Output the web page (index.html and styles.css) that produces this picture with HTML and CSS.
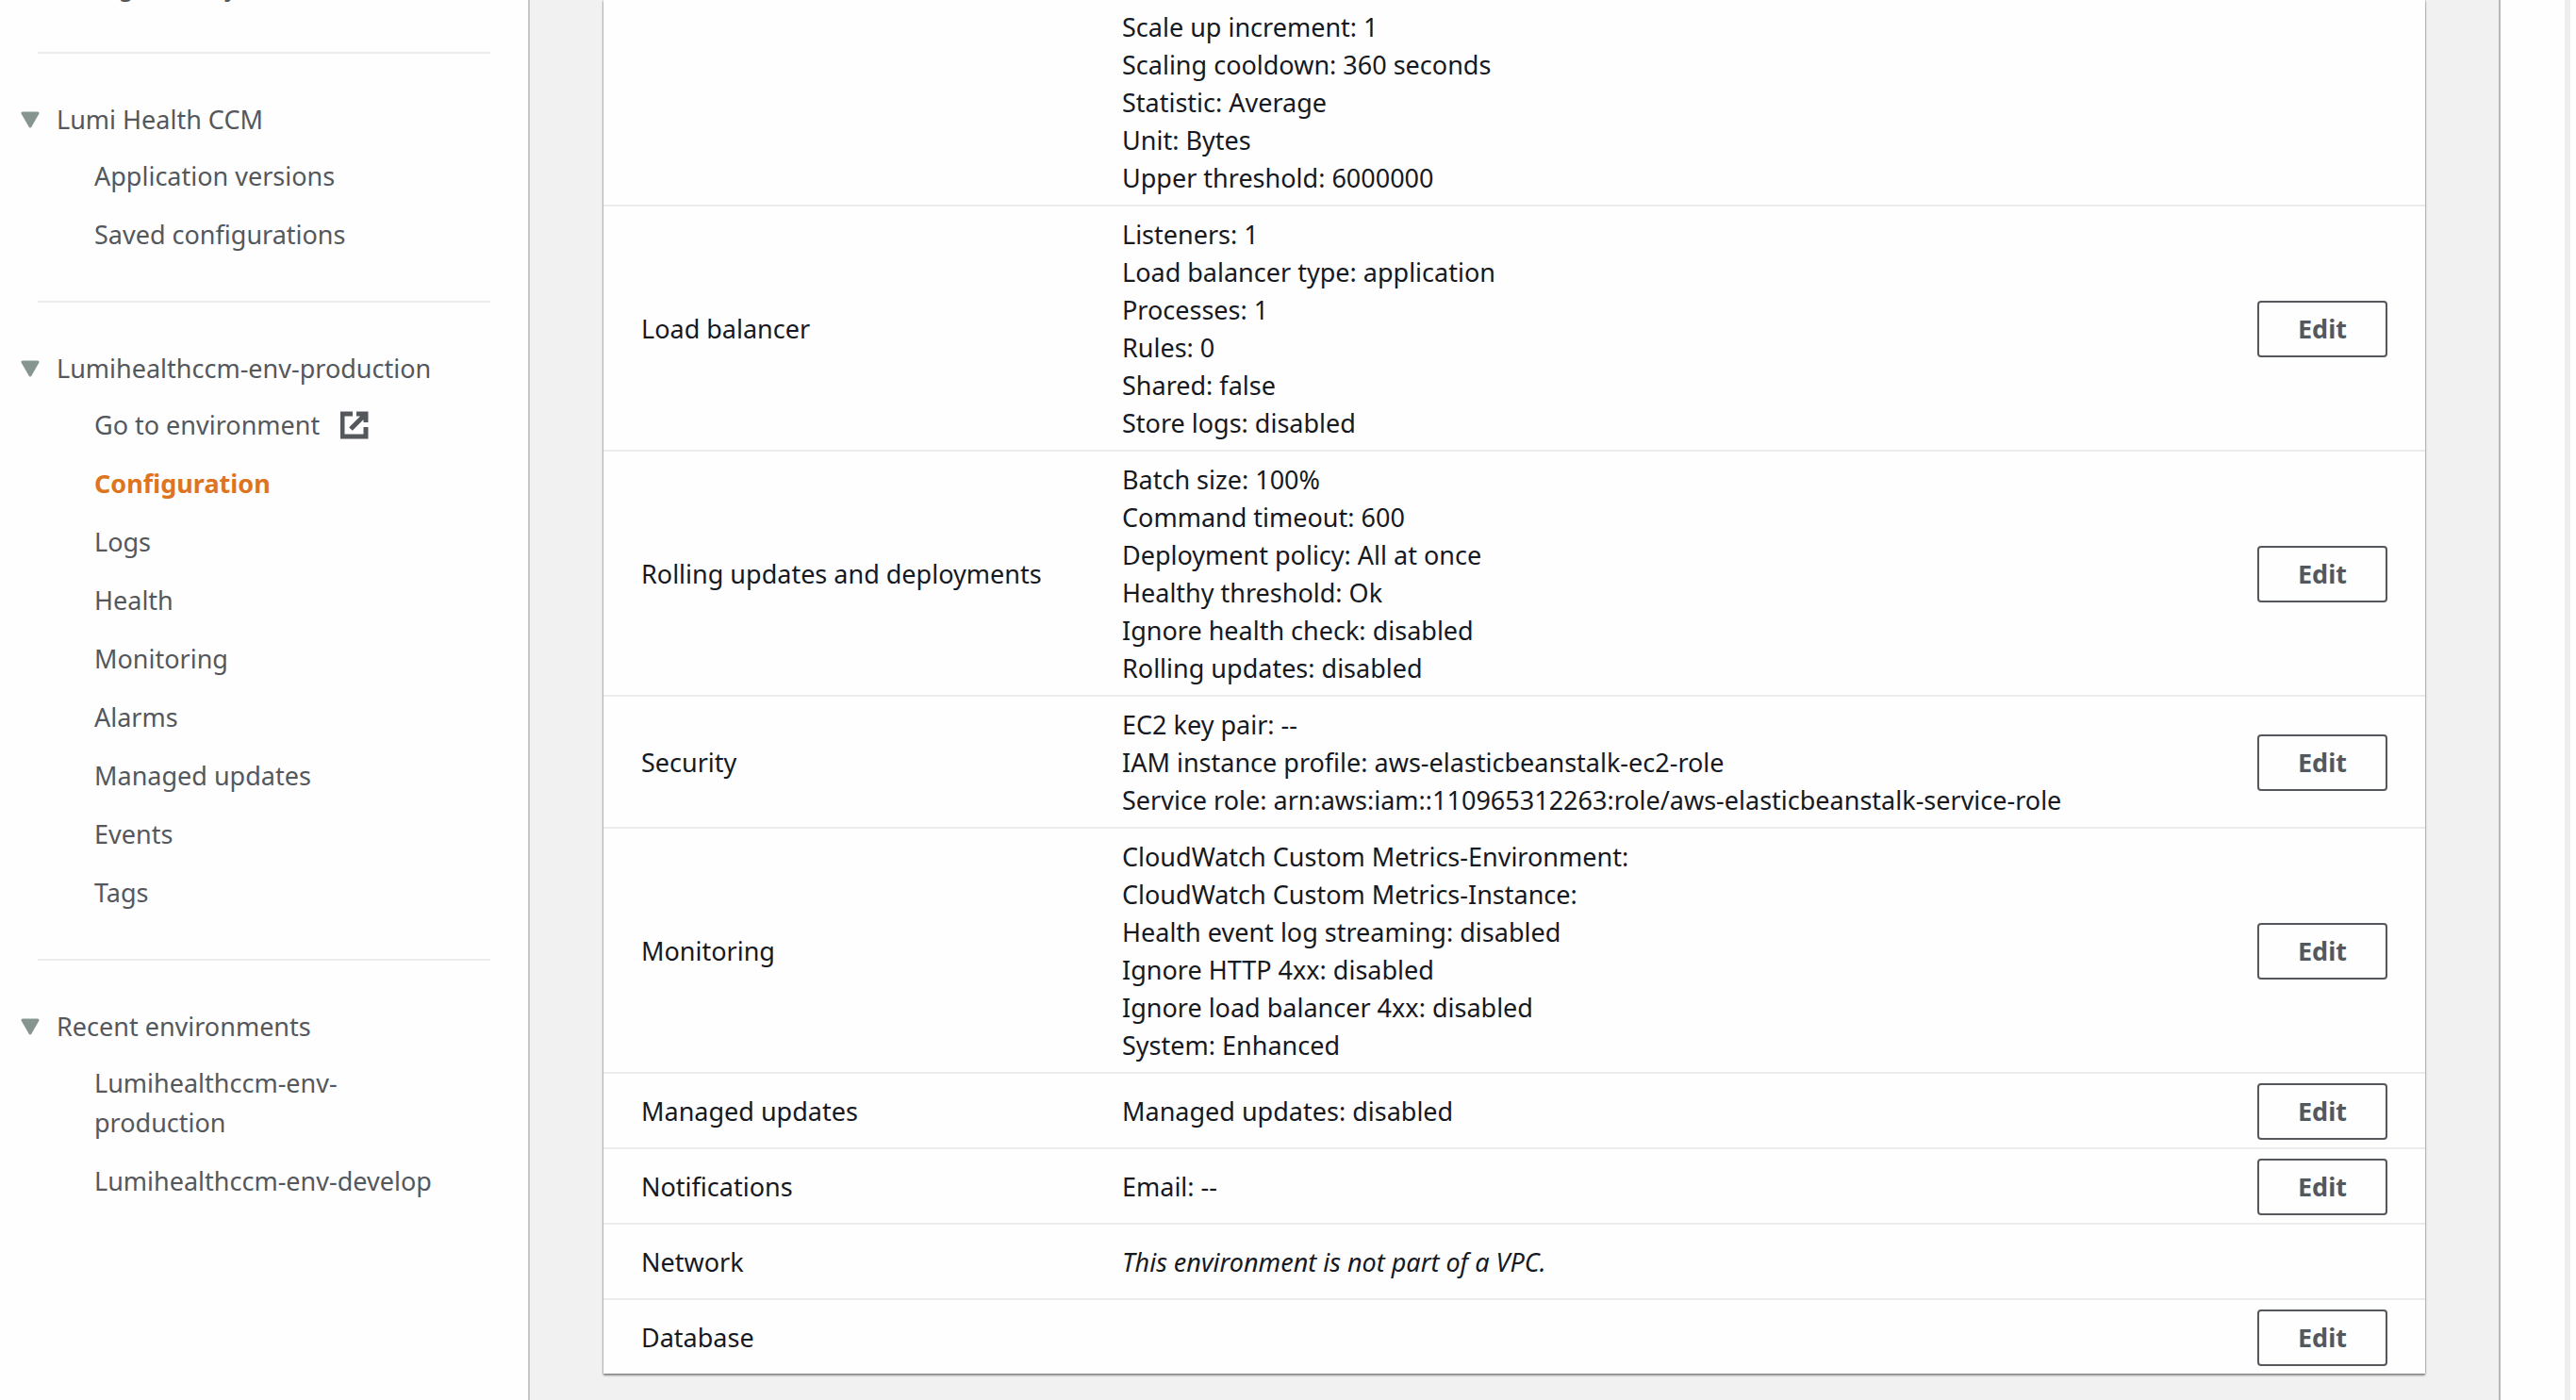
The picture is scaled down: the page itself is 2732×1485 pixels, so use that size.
FILE: index.html
```html
<!DOCTYPE html>
<html lang="en">
<head>
<meta charset="utf-8">
<title>Configuration - Elastic Beanstalk</title>
<link rel="stylesheet" href="styles.css">
</head>
<body>
<div class="app">
  <nav class="sidebar" aria-label="Elastic Beanstalk">
    <section class="nav-group">
      <a class="nav-top" href="#">Change history</a>
    </section>
    <section class="nav-group">
      <button class="nav-heading" type="button" aria-expanded="true"><svg class="caret" viewBox="0 0 20 18" aria-hidden="true"><path d="M2 2H18L10 16Z"/></svg>Lumi Health CCM</button>
      <ul class="nav-list">
        <li><a href="#">Application versions</a></li>
        <li><a href="#">Saved configurations</a></li>
      </ul>
    </section>
    <section class="nav-group">
      <button class="nav-heading" type="button" aria-expanded="true"><svg class="caret" viewBox="0 0 20 18" aria-hidden="true"><path d="M2 2H18L10 16Z"/></svg>Lumihealthccm-env-production</button>
      <ul class="nav-list">
        <li><a class="external" href="#">Go to environment <svg class="external-icon" viewBox="0 0 30 30" aria-hidden="true"><path d="M13 3H2V27H27V17M17 3H27V12M27 3L11 19"/></svg></a></li>
        <li><a class="current" href="#" aria-current="page">Configuration</a></li>
        <li><a href="#">Logs</a></li>
        <li><a href="#">Health</a></li>
        <li><a href="#">Monitoring</a></li>
        <li><a href="#">Alarms</a></li>
        <li><a href="#">Managed updates</a></li>
        <li><a href="#">Events</a></li>
        <li><a href="#">Tags</a></li>
      </ul>
    </section>
    <section class="nav-group">
      <button class="nav-heading" type="button" aria-expanded="true"><svg class="caret" viewBox="0 0 20 18" aria-hidden="true"><path d="M2 2H18L10 16Z"/></svg>Recent environments</button>
      <ul class="nav-list">
        <li><a href="#">Lumihealthccm-env-production</a></li>
        <li><a href="#">Lumihealthccm-env-develop</a></li>
      </ul>
    </section>
  </nav>

  <main class="content">
    <table class="config">
      <colgroup><col class="col-category"><col><col class="col-action"></colgroup>
      <tbody>
        <tr>
          <th scope="row"></th>
          <td>Scale up increment: 1<br>Scaling cooldown: 360 seconds<br>Statistic: Average<br>Unit: Bytes<br>Upper threshold: 6000000</td>
          <td></td>
        </tr>
        <tr>
          <th scope="row">Load balancer</th>
          <td>Listeners: 1<br>Load balancer type: application<br>Processes: 1<br>Rules: 0<br>Shared: false<br>Store logs: disabled</td>
          <td><button class="edit" type="button">Edit</button></td>
        </tr>
        <tr>
          <th scope="row">Rolling updates and deployments</th>
          <td>Batch size: 100%<br>Command timeout: 600<br>Deployment policy: All at once<br>Healthy threshold: Ok<br>Ignore health check: disabled<br>Rolling updates: disabled</td>
          <td><button class="edit" type="button">Edit</button></td>
        </tr>
        <tr>
          <th scope="row">Security</th>
          <td>EC2 key pair: --<br>IAM instance profile: aws-elasticbeanstalk-ec2-role<br>Service role: arn:aws:iam::110965312263:role/aws-elasticbeanstalk-service-role</td>
          <td><button class="edit" type="button">Edit</button></td>
        </tr>
        <tr>
          <th scope="row">Monitoring</th>
          <td>CloudWatch Custom Metrics-Environment:<br>CloudWatch Custom Metrics-Instance:<br>Health event log streaming: disabled<br>Ignore HTTP 4xx: disabled<br>Ignore load balancer 4xx: disabled<br>System: Enhanced</td>
          <td><button class="edit" type="button">Edit</button></td>
        </tr>
        <tr>
          <th scope="row">Managed updates</th>
          <td>Managed updates: disabled</td>
          <td><button class="edit" type="button">Edit</button></td>
        </tr>
        <tr>
          <th scope="row">Notifications</th>
          <td>Email: --</td>
          <td><button class="edit" type="button">Edit</button></td>
        </tr>
        <tr>
          <th scope="row">Network</th>
          <td><em>This environment is not part of a VPC.</em></td>
          <td></td>
        </tr>
        <tr>
          <th scope="row">Database</th>
          <td></td>
          <td><button class="edit" type="button">Edit</button></td>
        </tr>
      </tbody>
    </table>
  </main>

  <aside class="help-rail" aria-label="Help panel"></aside>
</div>
</body>
</html>
```
FILE: styles.css
```css
* {
  box-sizing: border-box;
}

body {
  margin: 0;
  background: #fefefe;
  color: #16191f;
  font: 27px/40px "Noto Sans", "Open Sans", sans-serif;
}

a {
  color: inherit;
  text-decoration: none;
}

button {
  font: inherit;
  color: inherit;
  background: none;
  cursor: pointer;
}

.app {
  display: grid;
  grid-template-columns: 562px 1fr 82px;
  min-height: 100vh;
}

/* Side navigation */
.sidebar {
  padding: 0 40px;
  border-right: 2px solid #c6c6c6;
  color: #54585d;
  line-height: 42px;
}

.nav-group {
  padding: 49px 0;
}

.nav-group:first-child {
  margin-top: -85px;
}

.nav-group + .nav-group {
  border-top: 2px solid #ebebeb;
}

.nav-top {
  display: block;
  padding-left: 20px;
}

.nav-heading {
  display: flex;
  align-items: center;
  gap: 18px;
  margin: 0 0 18px -18px;
  padding: 0;
  border: 0;
  line-height: 42px;
}

.caret {
  width: 20px;
  height: 18px;
  fill: #879590;
  stroke: #879590;
  stroke-width: 3;
  stroke-linejoin: round;
}

.nav-list {
  display: grid;
  gap: 20px;
  margin: 0;
  padding: 0 40px 0 60px;
  list-style: none;
}

.nav-list a {
  display: block;
}

.nav-list .external {
  display: flex;
  align-items: center;
  gap: 22px;
}

.external-icon {
  width: 30px;
  height: 30px;
  fill: none;
  stroke: #54585d;
  stroke-width: 5;
}

.nav-list .current {
  color: #de7420;
  font-weight: 700;
}

/* Configuration table */
.content {
  padding: 0 78px 24px;
  background: #f1f1f1;
}

.config {
  width: 100%;
  table-layout: fixed;
  border-collapse: separate;
  border-spacing: 0;
  background: #fefefe;
  box-shadow: 0 2px 2px #0006, 0 0 2px #0006;
}

.col-category {
  width: 550px;
}

.col-action {
  width: 218px;
}

.config th,
.config td {
  height: 80px;
  padding: 10px 0 8px;
  border-top: 2px solid #ebebeb;
  text-align: left;
  font-weight: 400;
}

.config tr:first-child > * {
  padding-top: 9px;
  border-top: 0;
}

.config th {
  padding-left: 40px;
}

.config td:last-child {
  padding-right: 40px;
  text-align: right;
}

.edit {
  display: block;
  width: 138px;
  height: 60px;
  margin-left: auto;
  border: 2px solid #54585d;
  border-radius: 4px;
  color: #54585d;
  font-weight: 700;
}

/* Collapsed help panel */
.help-rail {
  border-left: 2px solid #b8b8b8;
  background: linear-gradient(#eee, #eee) right 6px top / 6px 100% no-repeat #fefefe;
}
```
